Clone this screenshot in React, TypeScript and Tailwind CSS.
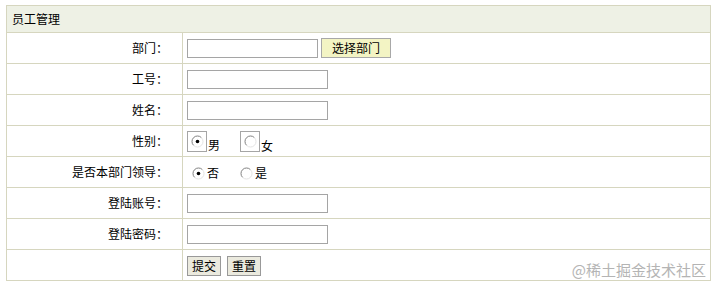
import React from 'react';

const font = { fontFamily: '"Noto Sans CJK SC", "Noto Sans", sans-serif' };

const Radio = ({ checked }: { checked?: boolean }) => (
  <svg width="13" height="13" viewBox="0 0 13 13" className="shrink-0">
    <circle cx="6.5" cy="6.5" r="5.5" fill="#fff" />
    <path d="M2.6 10.4 A5.5 5.5 0 0 1 10.4 2.6" fill="none" stroke="#808080" strokeWidth="1" />
    <path d="M10.4 2.6 A5.5 5.5 0 0 1 2.6 10.4" fill="none" stroke="#e4e4e4" strokeWidth="1" />
    {checked && <circle cx="6.5" cy="6.5" r="1.8" fill="#000" />}
  </svg>
);

const TextInput = ({ w = 'w-[141px]' }: { w?: string }) => (
  <input type="text" className={`${w} h-[19px] border border-[#a5a5a5] bg-white outline-none`} />
);

const Row = ({ label, children }: { label: string; children?: React.ReactNode }) => (
  <tr className="h-[31px]">
    <td className="border border-[#d6d6bf] pr-[14px] text-right align-middle">{label}</td>
    <td className="border border-[#d6d6bf] pl-[4px] align-middle">{children}</td>
  </tr>
);

export default function App() {
  return (
    <div className="relative w-[716px] h-[291px] bg-white text-[12px] text-black" style={font}>
      <div className="pt-[5px] pl-[6px]">
        <table className="w-[705px] border-collapse">
          <colgroup>
            <col className="w-[176px]" />
            <col />
          </colgroup>
          <tbody>
            <tr className="h-[27px] bg-[#eef1e5]">
              <td colSpan={2} className="border border-[#d6d6bf] pl-[5px] align-middle">
                员工管理
              </td>
            </tr>
            <Row label="部门：">
              <div className="flex items-center gap-[3px]">
                <TextInput w="w-[131px]" />
                <button className="h-[20px] w-[70px] border border-[#a8a8a8] bg-[#f3f4c4] text-[12px] leading-none">
                  选择部门
                </button>
              </div>
            </Row>
            <Row label="工号：">
              <TextInput />
            </Row>
            <Row label="姓名：">
              <TextInput />
            </Row>
            <Row label="性别：">
              <div className="flex items-end">
                <span className="flex h-[21px] w-[20px] items-center justify-center border border-[#a5a5a5]">
                  <Radio checked />
                </span>
                <span className="ml-[1px] mb-[-2px]">男</span>
                <span className="ml-[20px] flex h-[21px] w-[20px] items-center justify-center border border-[#a5a5a5]">
                  <Radio />
                </span>
                <span className="ml-[1px] mb-[-3px]">女</span>
              </div>
            </Row>
            <Row label="是否本部门领导：">
              <div className="flex items-center pl-[5px] pt-[2px]">
                <Radio checked />
                <span className="ml-[2px]">否</span>
                <span className="ml-[21px]">
                  <Radio />
                </span>
                <span className="ml-[2px]">是</span>
              </div>
            </Row>
            <Row label="登陆账号：">
              <TextInput />
            </Row>
            <Row label="登陆密码：">
              <TextInput />
            </Row>
            <Row label="">
              <div className="flex items-center gap-[6px] pt-[2px]">
                <button className="h-[20px] w-[34px] border border-[#999] bg-[#ebeade] text-[12px] leading-none">
                  提交
                </button>
                <button className="h-[20px] w-[34px] border border-[#999] bg-[#ebeade] text-[12px] leading-none">
                  重置
                </button>
              </div>
            </Row>
          </tbody>
        </table>
      </div>
      <div className="absolute right-[10px] top-[261px] text-[15px] leading-[18px] text-[#b4b4b4]">
        @稀土掘金技术社区
      </div>
    </div>
  );
}
